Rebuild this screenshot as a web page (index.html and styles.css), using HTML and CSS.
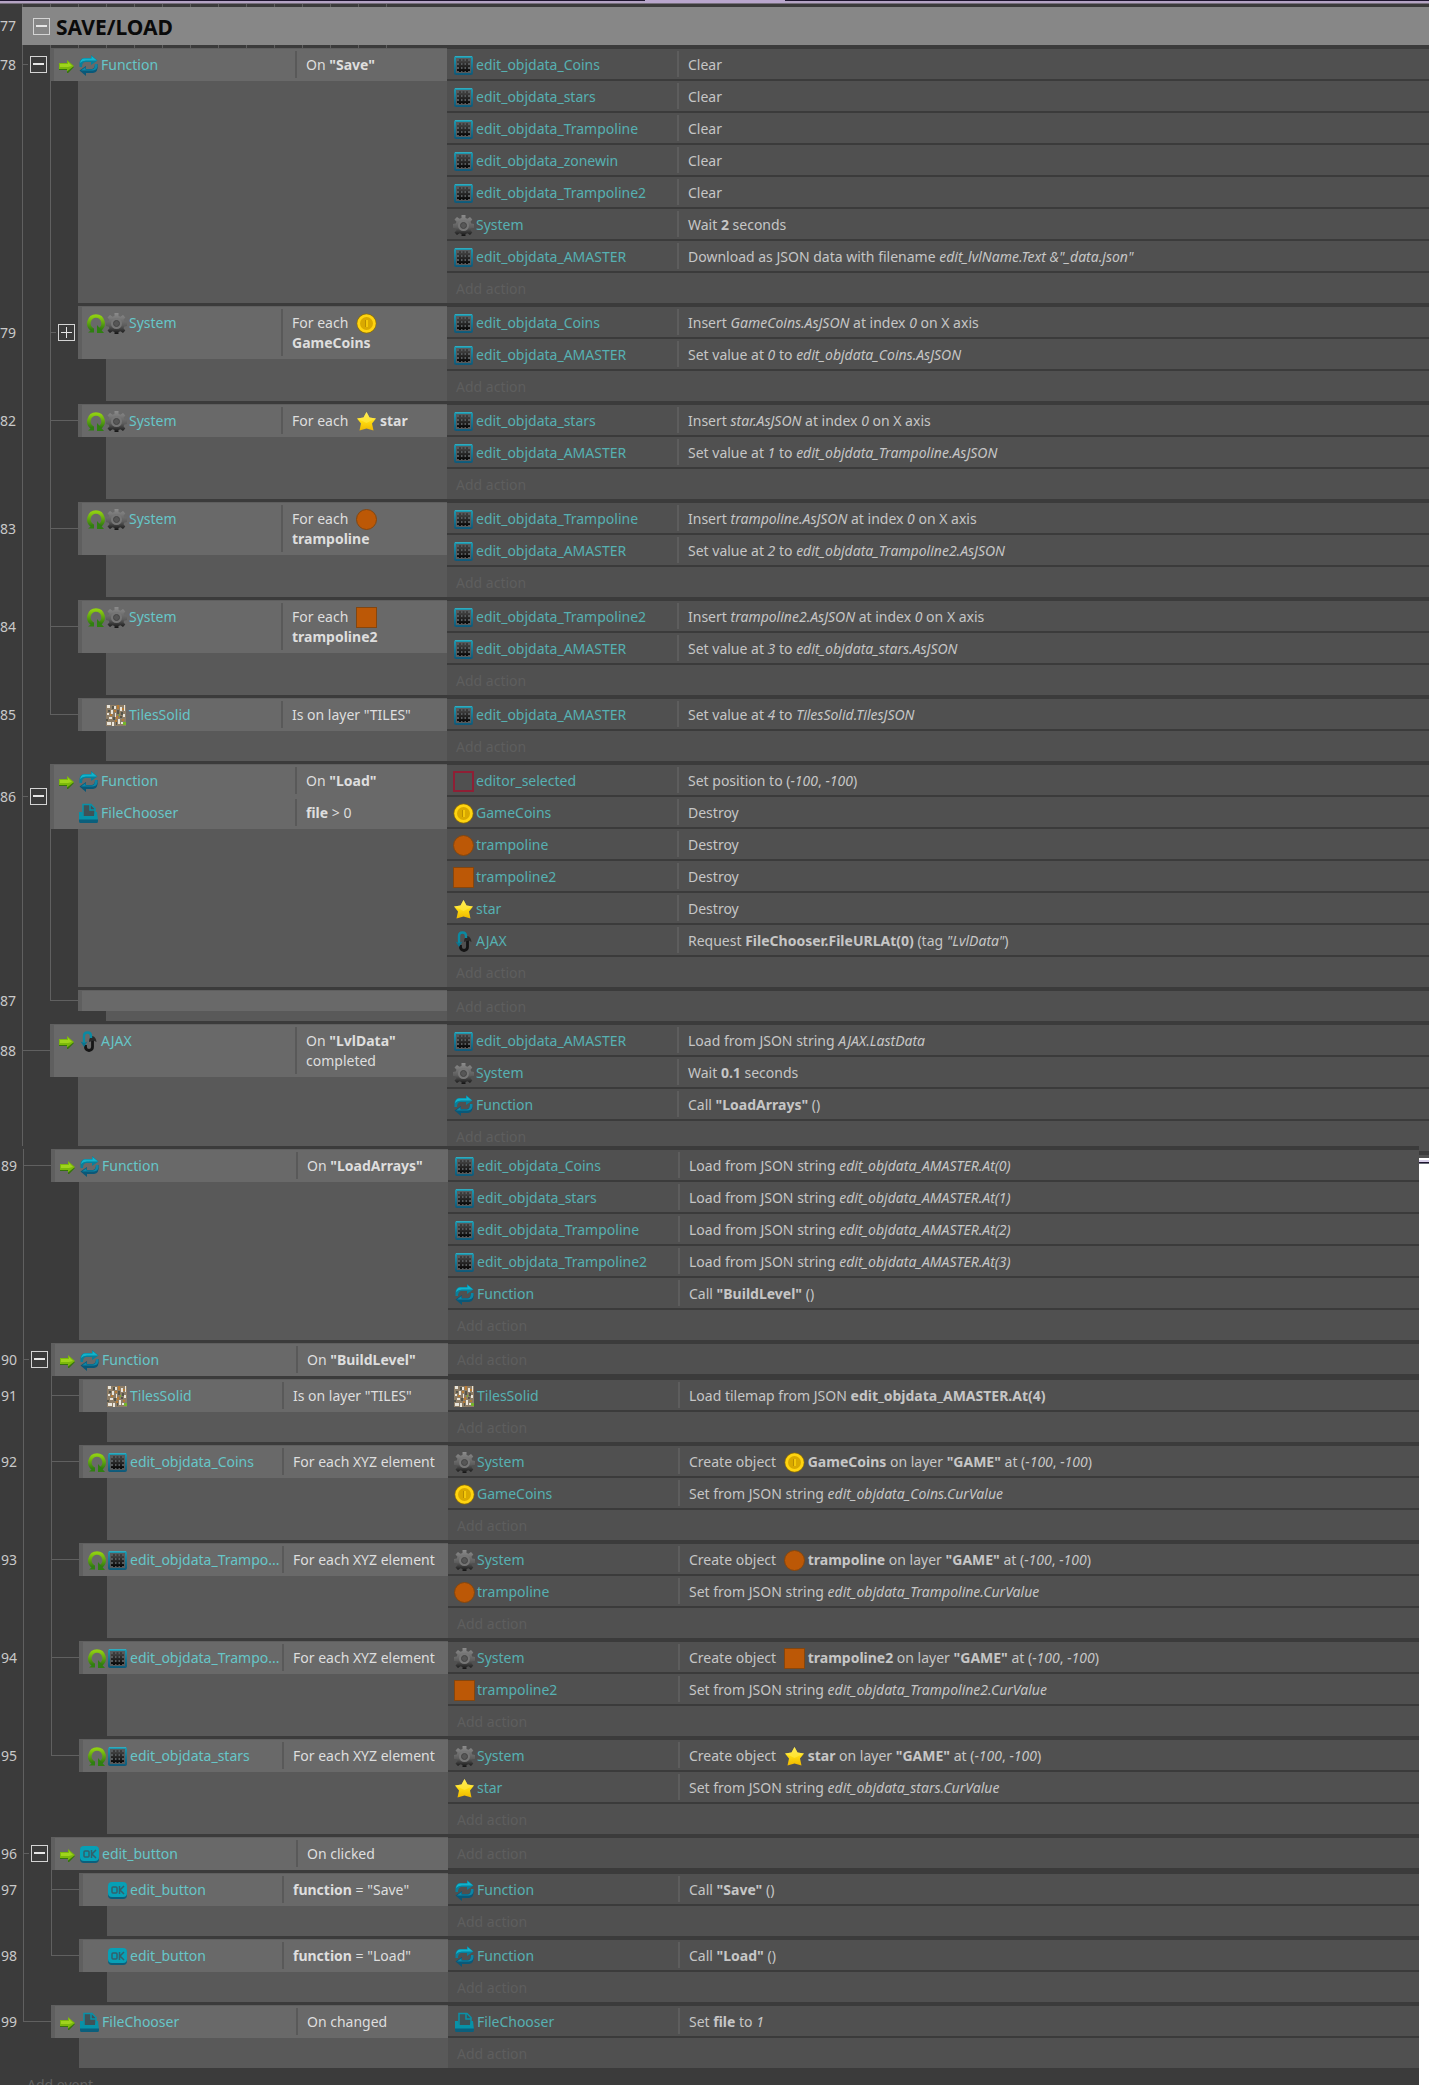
FILE: index.html
```
<!DOCTYPE html>
<html lang="en">
<head>
    <meta charset="utf-8">
    <title>Event sheet - SAVE/LOAD</title>
    <link rel="stylesheet" href="styles.css">
</head>
<body>
<svg class="defs" width="0" height="0" aria-hidden="true">
    <defs>
        <linearGradient id="gTeal" x1="0" y1="0" x2="0" y2="1"><stop offset="0" stop-color="#1f9ab0"/><stop offset="1" stop-color="#0f5878"/></linearGradient>
        <linearGradient id="gDark" x1="0" y1="0" x2="0" y2="1"><stop offset="0" stop-color="#404040"/><stop offset="1" stop-color="#0a0a0a"/></linearGradient>
        <linearGradient id="gGear" x1="0" y1="0" x2="0" y2="1"><stop offset="0" stop-color="#8c8c8c"/><stop offset=".6" stop-color="#5c5c5c"/><stop offset="1" stop-color="#141414"/></linearGradient>
        <linearGradient id="gLoop" x1="0" y1="0" x2="0" y2="1"><stop offset="0" stop-color="#8fd010"/><stop offset="1" stop-color="#2f7a10"/></linearGradient>
        <linearGradient id="gStar" x1="0" y1="0" x2="0" y2="1"><stop offset="0" stop-color="#fff06a"/><stop offset="0.5" stop-color="#ffdc10"/><stop offset="1" stop-color="#efb800"/></linearGradient>
    </defs>
    <symbol id="arrow" viewBox="0 0 20 21">
        <path d="M1 9h8V6l7 6-6 6H9v-3H1z" fill="#35740c"/>
        <path d="M1 8h8V5l7 6-7 5.500V14H1z" fill="#7cb80c"/>
        <path d="M2 9h8V7l4 4-4 1H2z" fill="#9fd41c"/>
    </symbol>
    <symbol id="func" viewBox="0 0 21 21">
        <path d="M1.500 12Q.5 3.500 6 3H13V0l6.500 5.500L13 10V7H7Q4 7.500 4 12z" fill="#0a7f9a"/>
        <path d="M2 8Q3 3.500 6 3.500H13.500V1L19 5.500H8Q4 5.500 2 8z" fill="#10b4cc"/>
        <path d="M19.500 9q1 8.500-4.500 9H8v3l-6.500-5.500L8 11v3h6q3-.5 3-5z" fill="#0a5878"/>
        <path d="M19.500 9q.5 6-4.500 6.500H3L7.500 12v2.500H14q3-.5 3-5.500z" fill="#0c86a6"/>
    </symbol>
    <symbol id="arr" viewBox="0 0 21 21">
        <rect x="1" y="1" width="19" height="19" rx="2" fill="url(#gTeal)"/>
        <rect x="3" y="3" width="15" height="15" fill="#565a5c"/>
        <path d="M6 4h2v13H6zM9.500 4h2v13h-2zM13 4h2v13h-2z" fill="url(#gDark)"/>
        <path d="M4 6h13v2H4zM4 10h13v2H4zM4 14h13v2H4z" fill="url(#gDark)"/>
        <path d="M2 1.500h17" stroke="#30aabd"/>
    </symbol>
    <symbol id="gear" viewBox="0 0 21 21">
        <path d="M8.500 0h4v3l2 .8L17 2l2.300 2.500-1.800 2.300.7 1.700 2.800.5v4l-2.800.5-.7 1.700 1.800 2.300L17 20l-2.500-1.800-2 .8v2h-4v-2l-2-.8L4 20l-2.500-2.500 2-2.300-.8-1.700L0 13V9l2.700-.5.8-1.700-2-2.300L4 2l2.500 1.800 2-.8z" fill="url(#gGear)"/>
        <circle cx="10.500" cy="10.500" r="5.500" fill="#767676"/>
        <circle cx="10.500" cy="10.500" r="3" fill="#565656" stroke="#454545"/>
    </symbol>
    <symbol id="loop" viewBox="0 0 20 21">
        <path d="M6.500 17Q2 14 3 9q1.500-6 7-6t7 6q1 5-4 8" fill="none" stroke="url(#gLoop)" stroke-width="3.600"/>
        <path d="M11 12v8h7z" fill="#2f8010"/>
        <path d="M2 19.500h6V15z" fill="#2f8010"/>
    </symbol>
    <symbol id="file" viewBox="0 0 21 21">
        <path d="M5 14V1.500h8l4 4V14" fill="#3f5257" stroke="#0891a8" stroke-width="1.500"/>
        <path d="M12 2v5h5" fill="none" stroke="#0891a8" stroke-width="1.500"/>
        <path d="M1 9h3l1 4h11l1-4h2l1 9q0 1-1 1H2q-1 0-1-1z" fill="#0792a8"/>
        <path d="M1 16.500h19V18q0 2-1 2H2q-1 0-1-2z" fill="#0b5f7c"/>
    </symbol>
    <symbol id="ajax" viewBox="0 0 21 21">
        <path d="M14.500 9v7q0 3-3.500 3.500-3.500-.5-3.500-3.500v-2" fill="none" stroke="#151515" stroke-width="2.800"/>
        <path d="M11 11q0-5 3.500-6Q18 6 18.500 11l-3-1.500z" fill="#2a2a2a"/>
        <path d="M6 13V5q0-3.500 3.500-3.500T13 5v2" fill="none" stroke="#0b8aa2" stroke-width="2.400"/>
        <path d="M2.500 10.500L6 12l3.500-1.500L6 16z" fill="#0b7590"/>
    </symbol>
    <symbol id="coin" viewBox="0 0 21 21">
        <circle cx="10.500" cy="10.500" r="10" fill="#8d6f08"/>
        <circle cx="10.500" cy="10.500" r="9.300" fill="#ffd410"/>
        <circle cx="10.500" cy="10.500" r="6.500" fill="#d9a900"/>
        <path d="M9 7h3v7H9z" fill="#f4c808"/><path d="M9 7h1v7H9z" fill="#b98d00"/>
    </symbol>
    <symbol id="circle" viewBox="0 0 21 21"><circle cx="10.500" cy="10.500" r="10" fill="#bc5806" stroke="#84460f"/></symbol>
    <symbol id="square" viewBox="0 0 21 21"><rect x=".5" y=".5" width="20" height="20" fill="#bc5806" stroke="#84460f"/></symbol>
    <symbol id="box" viewBox="0 0 21 21"><rect x="1" y="1" width="19" height="19" fill="none" stroke="#8f1f35" stroke-width="2"/></symbol>
    <symbol id="star" viewBox="0 0 21 21">
        <path d="M10.500 1l3 5.500 6.500 1-4 5 1.500 7-7-2-7 2 1.500-7-4-5 6.500-1z" fill="url(#gStar)"/>
        <path d="M10.500 1l3 5.500 6.500 1-9.500 4.500-9.500-4.500 6.500-1z" fill="#ffe94a" opacity=".6"/>
    </symbol>
    <symbol id="tiles" viewBox="0 0 21 21">
        <rect width="20" height="21" fill="#8c7c66"/>
        <path d="M1 0h3v3H1zM5 5h2v4H5zM1 8h2v2H1zM3 12h3v2H3zM1 17h4v3H1zM8 1h2v3H8zM14 2h2v4h-2zM18 0h1v6h-1zM17 9h2v3h-2zM12 14h2v5h-2zM6 17h2v4H6zM15 17h2v2h-2zM9 8h1v4H9z" fill="#e8e4da"/>
        <path d="M6 1h2v3H6zM2 5h2v2H2zM11 5h2v4h-2zM15 7h2v3h-2zM7 12h2v3H7zM14 11h2v2h-2zM10 17h1v3h-1zM0 14h2v2H0z" fill="#55554c"/>
        <path d="M11 0h2v4h-2zM8 5h2v2H8zM10 11h2v3h-2zM16 3h2v2h-2zM4 9h2v2H4zM9 15h2v2H9zM16 14h2v2h-2z" fill="#b57a34"/>
        <path d="M17 17h3v3h-3zM13 9h1v2h-1z" fill="#74b52a"/>
    </symbol>
    <symbol id="ok" viewBox="0 0 21 21">
        <rect x="1" y="3" width="19" height="16" rx="4" fill="#0c5f7c"/>
        <rect x="1" y="2" width="19" height="15" rx="4" fill="#07a0b6"/>
        <rect x="5" y="7" width="5" height="6" rx="1" fill="none" stroke="#33606c" stroke-width="1.500"/>
        <path d="M12.500 6v8M17 6l-4 4 4 4" fill="none" stroke="#33606c" stroke-width="1.500"/>
    </symbol>
</svg>

<div class="titlebar"><span class="tab"></span></div>

<main>
<section class="sheet sheet-top">
    <div class="group-row">
        <span class="num">77</span>
        <div class="group"><button class="toggle" aria-label="Collapse group"></button><h1>SAVE/LOAD</h1></div>
    </div>

    <!-- 78 -->
    <div class="event">
        <div class="left">
            <div class="head"><span class="num">78</span><span class="rail fold"><button class="toggle" aria-label="Collapse"></button></span>
                <div class="block">
                    <div class="cond"><span class="obj"><svg class="flag"><use href="#arrow"/></svg><svg class="ico"><use href="#func"/></svg>Function</span><span class="txt">On <b>"Save"</b></span></div>
                </div>
            </div>
            <div class="rest"><span class="num"></span><span class="rail"></span><span class="rail"></span><span class="fill"></span></div>
        </div>
        <div class="actions">
            <div class="act"><span class="obj"><svg class="ico"><use href="#arr"/></svg>edit_objdata_Coins</span><span class="txt">Clear</span></div>
            <div class="act"><span class="obj"><svg class="ico"><use href="#arr"/></svg>edit_objdata_stars</span><span class="txt">Clear</span></div>
            <div class="act"><span class="obj"><svg class="ico"><use href="#arr"/></svg>edit_objdata_Trampoline</span><span class="txt">Clear</span></div>
            <div class="act"><span class="obj"><svg class="ico"><use href="#arr"/></svg>edit_objdata_zonewin</span><span class="txt">Clear</span></div>
            <div class="act"><span class="obj"><svg class="ico"><use href="#arr"/></svg>edit_objdata_Trampoline2</span><span class="txt">Clear</span></div>
            <div class="act"><span class="obj"><svg class="ico"><use href="#gear"/></svg>System</span><span class="txt">Wait <b>2</b> seconds</span></div>
            <div class="act"><span class="obj"><svg class="ico"><use href="#arr"/></svg>edit_objdata_AMASTER</span><span class="txt">Download as JSON data with filename <i>edit_lvlName.Text &amp;"_data.json"</i></span></div>
            <button class="add">Add action</button>
        </div>
    </div>

    <!-- 79 -->
    <div class="event sub">
        <div class="left">
            <div class="head"><span class="num">79</span><span class="rail"></span><span class="rail fold"><button class="toggle closed" aria-label="Expand"></button></span>
                <div class="block">
                    <div class="cond"><span class="obj"><svg class="flag"><use href="#loop"/></svg><svg class="ico"><use href="#gear"/></svg>System</span><span class="txt">For each <svg class="pic"><use href="#coin"/></svg> <b>GameCoins</b></span></div>
                </div>
            </div>
            <div class="rest"><span class="num"></span><span class="rail"></span><span class="rail"></span><span class="rail none"></span><span class="fill"></span></div>
        </div>
        <div class="actions">
            <div class="act"><span class="obj"><svg class="ico"><use href="#arr"/></svg>edit_objdata_Coins</span><span class="txt">Insert <i>GameCoins.AsJSON</i> at index <i>0</i> on X axis</span></div>
            <div class="act"><span class="obj"><svg class="ico"><use href="#arr"/></svg>edit_objdata_AMASTER</span><span class="txt">Set value at <i>0</i> to <i>edit_objdata_Coins.AsJSON</i></span></div>
            <button class="add">Add action</button>
        </div>
    </div>

    <!-- 82 -->
    <div class="event sub">
        <div class="left">
            <div class="head"><span class="num">82</span><span class="rail"></span><span class="rail dash"></span>
                <div class="block">
                    <div class="cond"><span class="obj"><svg class="flag"><use href="#loop"/></svg><svg class="ico"><use href="#gear"/></svg>System</span><span class="txt">For each <svg class="pic"><use href="#star"/></svg><b>star</b></span></div>
                </div>
            </div>
            <div class="rest"><span class="num"></span><span class="rail"></span><span class="rail"></span><span class="rail none"></span><span class="fill"></span></div>
        </div>
        <div class="actions">
            <div class="act"><span class="obj"><svg class="ico"><use href="#arr"/></svg>edit_objdata_stars</span><span class="txt">Insert <i>star.AsJSON</i> at index <i>0</i> on X axis</span></div>
            <div class="act"><span class="obj"><svg class="ico"><use href="#arr"/></svg>edit_objdata_AMASTER</span><span class="txt">Set value at <i>1</i> to <i>edit_objdata_Trampoline.AsJSON</i></span></div>
            <button class="add">Add action</button>
        </div>
    </div>

    <!-- 83 -->
    <div class="event sub">
        <div class="left">
            <div class="head"><span class="num">83</span><span class="rail"></span><span class="rail dash"></span>
                <div class="block">
                    <div class="cond"><span class="obj"><svg class="flag"><use href="#loop"/></svg><svg class="ico"><use href="#gear"/></svg>System</span><span class="txt">For each <svg class="pic"><use href="#circle"/></svg> <b>trampoline</b></span></div>
                </div>
            </div>
            <div class="rest"><span class="num"></span><span class="rail"></span><span class="rail"></span><span class="rail none"></span><span class="fill"></span></div>
        </div>
        <div class="actions">
            <div class="act"><span class="obj"><svg class="ico"><use href="#arr"/></svg>edit_objdata_Trampoline</span><span class="txt">Insert <i>trampoline.AsJSON</i> at index <i>0</i> on X axis</span></div>
            <div class="act"><span class="obj"><svg class="ico"><use href="#arr"/></svg>edit_objdata_AMASTER</span><span class="txt">Set value at <i>2</i> to <i>edit_objdata_Trampoline2.AsJSON</i></span></div>
            <button class="add">Add action</button>
        </div>
    </div>

    <!-- 84 -->
    <div class="event sub">
        <div class="left">
            <div class="head"><span class="num">84</span><span class="rail"></span><span class="rail dash"></span>
                <div class="block">
                    <div class="cond"><span class="obj"><svg class="flag"><use href="#loop"/></svg><svg class="ico"><use href="#gear"/></svg>System</span><span class="txt">For each <svg class="pic"><use href="#square"/></svg> <b>trampoline2</b></span></div>
                </div>
            </div>
            <div class="rest"><span class="num"></span><span class="rail"></span><span class="rail"></span><span class="rail none"></span><span class="fill"></span></div>
        </div>
        <div class="actions">
            <div class="act"><span class="obj"><svg class="ico"><use href="#arr"/></svg>edit_objdata_Trampoline2</span><span class="txt">Insert <i>trampoline2.AsJSON</i> at index <i>0</i> on X axis</span></div>
            <div class="act"><span class="obj"><svg class="ico"><use href="#arr"/></svg>edit_objdata_AMASTER</span><span class="txt">Set value at <i>3</i> to <i>edit_objdata_stars.AsJSON</i></span></div>
            <button class="add">Add action</button>
        </div>
    </div>

    <!-- 85 -->
    <div class="event sub">
        <div class="left">
            <div class="head"><span class="num">85</span><span class="rail"></span><span class="rail dash last"></span>
                <div class="block">
                    <div class="cond"><span class="obj"><span class="flag"></span><svg class="ico"><use href="#tiles"/></svg>TilesSolid</span><span class="txt">Is on layer "TILES"</span></div>
                </div>
            </div>
            <div class="rest"><span class="num"></span><span class="rail"></span><span class="rail none"></span><span class="rail none"></span><span class="fill"></span></div>
        </div>
        <div class="actions">
            <div class="act"><span class="obj"><svg class="ico"><use href="#arr"/></svg>edit_objdata_AMASTER</span><span class="txt">Set value at <i>4</i> to <i>TilesSolid.TilesJSON</i></span></div>
            <button class="add">Add action</button>
        </div>
    </div>

    <!-- 86 -->
    <div class="event">
        <div class="left">
            <div class="head"><span class="num">86</span><span class="rail fold"><button class="toggle" aria-label="Collapse"></button></span>
                <div class="block">
                    <div class="cond"><span class="obj"><svg class="flag"><use href="#arrow"/></svg><svg class="ico"><use href="#func"/></svg>Function</span><span class="txt">On <b>"Load"</b></span></div>
                    <div class="cond"><span class="obj"><span class="flag"></span><svg class="ico"><use href="#file"/></svg>FileChooser</span><span class="txt"><b>file</b> &gt; 0</span></div>
                </div>
            </div>
            <div class="rest"><span class="num"></span><span class="rail"></span><span class="rail"></span><span class="fill"></span></div>
        </div>
        <div class="actions">
            <div class="act"><span class="obj"><svg class="ico"><use href="#box"/></svg>editor_selected</span><span class="txt">Set position to (<i>-100</i>, <i>-100</i>)</span></div>
            <div class="act"><span class="obj"><svg class="ico"><use href="#coin"/></svg>GameCoins</span><span class="txt">Destroy</span></div>
            <div class="act"><span class="obj"><svg class="ico"><use href="#circle"/></svg>trampoline</span><span class="txt">Destroy</span></div>
            <div class="act"><span class="obj"><svg class="ico"><use href="#square"/></svg>trampoline2</span><span class="txt">Destroy</span></div>
            <div class="act"><span class="obj"><svg class="ico"><use href="#star"/></svg>star</span><span class="txt">Destroy</span></div>
            <div class="act"><span class="obj"><svg class="ico"><use href="#ajax"/></svg>AJAX</span><span class="txt">Request <b>FileChooser.FileURLAt(0)</b> (tag <i>"LvlData"</i>)</span></div>
            <button class="add">Add action</button>
        </div>
    </div>

    <!-- 87 -->
    <div class="event sub">
        <div class="left">
            <div class="head"><span class="num">87</span><span class="rail"></span><span class="rail dash last"></span>
                <div class="block empty"></div>
            </div>
            <div class="rest"><span class="num"></span><span class="rail"></span><span class="rail none"></span><span class="rail none"></span><span class="fill"></span></div>
        </div>
        <div class="actions">
            <button class="add">Add action</button>
        </div>
    </div>

    <!-- 88 -->
    <div class="event cut">
        <div class="left">
            <div class="head"><span class="num">88</span><span class="rail dash"></span>
                <div class="block">
                    <div class="cond"><span class="obj"><svg class="flag"><use href="#arrow"/></svg><svg class="ico"><use href="#ajax"/></svg>AJAX</span><span class="txt">On <b>"LvlData"</b> completed</span></div>
                </div>
            </div>
            <div class="rest"><span class="num"></span><span class="rail"></span><span class="rail none"></span><span class="fill"></span></div>
        </div>
        <div class="actions">
            <div class="act"><span class="obj"><svg class="ico"><use href="#arr"/></svg>edit_objdata_AMASTER</span><span class="txt">Load from JSON string <i>AJAX.LastData</i></span></div>
            <div class="act"><span class="obj"><svg class="ico"><use href="#gear"/></svg>System</span><span class="txt">Wait <b>0.1</b> seconds</span></div>
            <div class="act"><span class="obj"><svg class="ico"><use href="#func"/></svg>Function</span><span class="txt">Call <b>"LoadArrays"</b> ()</span></div>
            <button class="add">Add action</button>
        </div>
    </div>
</section>

<section class="sheet sheet-bottom">
    <div class="corner"></div>
    <!-- 89 -->
    <div class="event">
        <div class="left">
            <div class="head"><span class="num">89</span><span class="rail dash"></span>
                <div class="block">
                    <div class="cond"><span class="obj"><svg class="flag"><use href="#arrow"/></svg><svg class="ico"><use href="#func"/></svg>Function</span><span class="txt">On <b>"LoadArrays"</b></span></div>
                </div>
            </div>
            <div class="rest"><span class="num"></span><span class="rail"></span><span class="rail none"></span><span class="fill"></span></div>
        </div>
        <div class="actions">
            <div class="act"><span class="obj"><svg class="ico"><use href="#arr"/></svg>edit_objdata_Coins</span><span class="txt">Load from JSON string <i>edit_objdata_AMASTER.At(0)</i></span></div>
            <div class="act"><span class="obj"><svg class="ico"><use href="#arr"/></svg>edit_objdata_stars</span><span class="txt">Load from JSON string <i>edit_objdata_AMASTER.At(1)</i></span></div>
            <div class="act"><span class="obj"><svg class="ico"><use href="#arr"/></svg>edit_objdata_Trampoline</span><span class="txt">Load from JSON string <i>edit_objdata_AMASTER.At(2)</i></span></div>
            <div class="act"><span class="obj"><svg class="ico"><use href="#arr"/></svg>edit_objdata_Trampoline2</span><span class="txt">Load from JSON string <i>edit_objdata_AMASTER.At(3)</i></span></div>
            <div class="act"><span class="obj"><svg class="ico"><use href="#func"/></svg>Function</span><span class="txt">Call <b>"BuildLevel"</b> ()</span></div>
            <button class="add">Add action</button>
        </div>
    </div>

    <!-- 90 -->
    <div class="event">
        <div class="left">
            <div class="head"><span class="num">90</span><span class="rail fold"><button class="toggle" aria-label="Collapse"></button></span>
                <div class="block">
                    <div class="cond"><span class="obj"><svg class="flag"><use href="#arrow"/></svg><svg class="ico"><use href="#func"/></svg>Function</span><span class="txt">On <b>"BuildLevel"</b></span></div>
                </div>
            </div>
            <div class="rest"><span class="num"></span><span class="rail"></span><span class="rail"></span><span class="fill"></span></div>
        </div>
        <div class="actions">
            <button class="add">Add action</button>
        </div>
    </div>

    <!-- 91 -->
    <div class="event sub">
        <div class="left">
            <div class="head"><span class="num">91</span><span class="rail"></span><span class="rail dash"></span>
                <div class="block">
                    <div class="cond"><span class="obj"><span class="flag"></span><svg class="ico"><use href="#tiles"/></svg>TilesSolid</span><span class="txt">Is on layer "TILES"</span></div>
                </div>
            </div>
            <div class="rest"><span class="num"></span><span class="rail"></span><span class="rail"></span><span class="rail none"></span><span class="fill"></span></div>
        </div>
        <div class="actions">
            <div class="act"><span class="obj"><svg class="ico"><use href="#tiles"/></svg>TilesSolid</span><span class="txt">Load tilemap from JSON <b>edit_objdata_AMASTER.At(4)</b></span></div>
            <button class="add">Add action</button>
        </div>
    </div>

    <!-- 92 -->
    <div class="event sub">
        <div class="left">
            <div class="head"><span class="num">92</span><span class="rail"></span><span class="rail dash"></span>
                <div class="block">
                    <div class="cond"><span class="obj"><svg class="flag"><use href="#loop"/></svg><svg class="ico"><use href="#arr"/></svg>edit_objdata_Coins</span><span class="txt">For each XYZ element</span></div>
                </div>
            </div>
            <div class="rest"><span class="num"></span><span class="rail"></span><span class="rail"></span><span class="rail none"></span><span class="fill"></span></div>
        </div>
        <div class="actions">
            <div class="act"><span class="obj"><svg class="ico"><use href="#gear"/></svg>System</span><span class="txt">Create object <svg class="pic"><use href="#coin"/></svg><b>GameCoins</b> on layer <b>"GAME"</b> at (<i>-100</i>, <i>-100</i>)</span></div>
            <div class="act"><span class="obj"><svg class="ico"><use href="#coin"/></svg>GameCoins</span><span class="txt">Set from JSON string <i>edit_objdata_Coins.CurValue</i></span></div>
            <button class="add">Add action</button>
        </div>
    </div>

    <!-- 93 -->
    <div class="event sub">
        <div class="left">
            <div class="head"><span class="num">93</span><span class="rail"></span><span class="rail dash"></span>
                <div class="block">
                    <div class="cond"><span class="obj"><svg class="flag"><use href="#loop"/></svg><svg class="ico"><use href="#arr"/></svg>edit_objdata_Trampo...</span><span class="txt">For each XYZ element</span></div>
                </div>
            </div>
            <div class="rest"><span class="num"></span><span class="rail"></span><span class="rail"></span><span class="rail none"></span><span class="fill"></span></div>
        </div>
        <div class="actions">
            <div class="act"><span class="obj"><svg class="ico"><use href="#gear"/></svg>System</span><span class="txt">Create object <svg class="pic"><use href="#circle"/></svg><b>trampoline</b> on layer <b>"GAME"</b> at (<i>-100</i>, <i>-100</i>)</span></div>
            <div class="act"><span class="obj"><svg class="ico"><use href="#circle"/></svg>trampoline</span><span class="txt">Set from JSON string <i>edit_objdata_Trampoline.CurValue</i></span></div>
            <button class="add">Add action</button>
        </div>
    </div>

    <!-- 94 -->
    <div class="event sub">
        <div class="left">
            <div class="head"><span class="num">94</span><span class="rail"></span><span class="rail dash"></span>
                <div class="block">
                    <div class="cond"><span class="obj"><svg class="flag"><use href="#loop"/></svg><svg class="ico"><use href="#arr"/></svg>edit_objdata_Trampo...</span><span class="txt">For each XYZ element</span></div>
                </div>
            </div>
            <div class="rest"><span class="num"></span><span class="rail"></span><span class="rail"></span><span class="rail none"></span><span class="fill"></span></div>
        </div>
        <div class="actions">
            <div class="act"><span class="obj"><svg class="ico"><use href="#gear"/></svg>System</span><span class="txt">Create object <svg class="pic"><use href="#square"/></svg><b>trampoline2</b> on layer <b>"GAME"</b> at (<i>-100</i>, <i>-100</i>)</span></div>
            <div class="act"><span class="obj"><svg class="ico"><use href="#square"/></svg>trampoline2</span><span class="txt">Set from JSON string <i>edit_objdata_Trampoline2.CurValue</i></span></div>
            <button class="add">Add action</button>
        </div>
    </div>

    <!-- 95 -->
    <div class="event sub">
        <div class="left">
            <div class="head"><span class="num">95</span><span class="rail"></span><span class="rail dash last"></span>
                <div class="block">
                    <div class="cond"><span class="obj"><svg class="flag"><use href="#loop"/></svg><svg class="ico"><use href="#arr"/></svg>edit_objdata_stars</span><span class="txt">For each XYZ element</span></div>
                </div>
            </div>
            <div class="rest"><span class="num"></span><span class="rail"></span><span class="rail none"></span><span class="rail none"></span><span class="fill"></span></div>
        </div>
        <div class="actions">
            <div class="act"><span class="obj"><svg class="ico"><use href="#gear"/></svg>System</span><span class="txt">Create object <svg class="pic"><use href="#star"/></svg><b>star</b> on layer <b>"GAME"</b> at (<i>-100</i>, <i>-100</i>)</span></div>
            <div class="act"><span class="obj"><svg class="ico"><use href="#star"/></svg>star</span><span class="txt">Set from JSON string <i>edit_objdata_stars.CurValue</i></span></div>
            <button class="add">Add action</button>
        </div>
    </div>

    <!-- 96 -->
    <div class="event">
        <div class="left">
            <div class="head"><span class="num">96</span><span class="rail fold"><button class="toggle" aria-label="Collapse"></button></span>
                <div class="block">
                    <div class="cond"><span class="obj"><svg class="flag"><use href="#arrow"/></svg><svg class="ico"><use href="#ok"/></svg>edit_button</span><span class="txt">On clicked</span></div>
                </div>
            </div>
            <div class="rest"><span class="num"></span><span class="rail"></span><span class="rail"></span><span class="fill"></span></div>
        </div>
        <div class="actions">
            <button class="add">Add action</button>
        </div>
    </div>

    <!-- 97 -->
    <div class="event sub">
        <div class="left">
            <div class="head"><span class="num">97</span><span class="rail"></span><span class="rail dash"></span>
                <div class="block">
                    <div class="cond"><span class="obj"><span class="flag"></span><svg class="ico"><use href="#ok"/></svg>edit_button</span><span class="txt"><b>function</b> = "Save"</span></div>
                </div>
            </div>
            <div class="rest"><span class="num"></span><span class="rail"></span><span class="rail"></span><span class="rail none"></span><span class="fill"></span></div>
        </div>
        <div class="actions">
            <div class="act"><span class="obj"><svg class="ico"><use href="#func"/></svg>Function</span><span class="txt">Call <b>"Save"</b> ()</span></div>
            <button class="add">Add action</button>
        </div>
    </div>

    <!-- 98 -->
    <div class="event sub">
        <div class="left">
            <div class="head"><span class="num">98</span><span class="rail"></span><span class="rail dash last"></span>
                <div class="block">
                    <div class="cond"><span class="obj"><span class="flag"></span><svg class="ico"><use href="#ok"/></svg>edit_button</span><span class="txt"><b>function</b> = "Load"</span></div>
                </div>
            </div>
            <div class="rest"><span class="num"></span><span class="rail"></span><span class="rail none"></span><span class="rail none"></span><span class="fill"></span></div>
        </div>
        <div class="actions">
            <div class="act"><span class="obj"><svg class="ico"><use href="#func"/></svg>Function</span><span class="txt">Call <b>"Load"</b> ()</span></div>
            <button class="add">Add action</button>
        </div>
    </div>

    <!-- 99 -->
    <div class="event">
        <div class="left">
            <div class="head"><span class="num">99</span><span class="rail dash last"></span>
                <div class="block">
                    <div class="cond"><span class="obj"><svg class="flag"><use href="#arrow"/></svg><svg class="ico"><use href="#file"/></svg>FileChooser</span><span class="txt">On changed</span></div>
                </div>
            </div>
            <div class="rest"><span class="num"></span><span class="rail none"></span><span class="rail none"></span><span class="fill"></span></div>
        </div>
        <div class="actions">
            <div class="act"><span class="obj"><svg class="ico"><use href="#file"/></svg>FileChooser</span><span class="txt">Set <b>file</b> to <i>1</i></span></div>
            <button class="add">Add action</button>
        </div>
    </div>
    <div class="footer"><button class="add-event">Add event</button></div>
</section>
</main>
</body>
</html>
```
FILE: styles.css
```
* {
    box-sizing: border-box;
}
body {
    margin: 0;
    background: #fff;
    font-family: "Noto Sans", "Open Sans", sans-serif;
    font-size: 14px;
    line-height: 20px;
    color: #c6c6c6;
}
button {
    font: inherit;
    border: 0;
    background: none;
    padding: 0;
    text-align: left;
    cursor: pointer;
}
.defs {
    position: absolute;
}

/* strip of the window above the sheet */
.titlebar {
    display: flex;
    justify-content: center;
    height: 4px;
    margin-right: 11px;
    background: linear-gradient(#1f1530 0 1px, #b5a4c4 1px 3px, #77707c 3px);
}
.tab {
    width: 140px;
    height: 3px;
    background: #b9a6cc;
}

.sheet {
    background: #3b3b3b;
}
.sheet-top {
    margin-right: 11px;
    padding-top: 3px;
    background: repeating-linear-gradient(90deg, #606060 0 1px, transparent 1px 28px) 22px 0 / 366px 47px no-repeat #3b3b3b;
}
.sheet-bottom {
    position: relative;
    margin-right: 21px;
    padding: 3px 0 0 1px;
}
.corner {
    position: absolute;
    left: 100%;
    top: 0;
    width: 10px;
    height: 18px;
    background: linear-gradient(#505050 0 5px, #3b3b3b 5px 9px, #505050 9px 12px, #fff 12px 14px, #d9d0ea 14px 16px, #1f1530 16px 17px, #6a7078 17px);
}

.num {
    flex: none;
    width: 22px;
    align-self: center;
    color: #c9c9c9;
}

/* group title */
.group-row {
    display: flex;
    margin-bottom: 3px;
}
.group-row .num {
    align-self: stretch;
    padding-top: 9px;
    background: #3b3b3b;
}
.group {
    flex: 1;
    display: flex;
    align-items: center;
    gap: 6px;
    height: 38px;
    padding-left: 11px;
    background: #878787;
}
.group h1 {
    margin: 2px 0 0;
    font-size: 21px;
    line-height: 28px;
    color: #0a0a0a;
}

/* event = numbers, tree lines and conditions on the left, actions on the right */
.event {
    display: flex;
    background: #3b3b3b;
}
.left {
    flex: none;
    display: flex;
    flex-direction: column;
    width: 447px;
}
.head,
.rest {
    display: flex;
}
.rest {
    flex: 1;
    min-height: 3px;
}
.rail {
    flex: none;
    width: 28px;
    border-left: 1px solid #606060;
}
.rail.none {
    border-left-color: transparent;
}
.rail.dash {
    background: linear-gradient(#606060, #606060) 0 50% / 27px 1px no-repeat;
}
.rail.fold {
    display: flex;
    align-items: center;
    padding-left: 7px;
    background: linear-gradient(#606060, #606060) 0 50% / 5px 1px no-repeat;
}
.rail.last {
    border-left: 0;
    background: linear-gradient(#606060, #606060) 0 50% / 28px 1px no-repeat, linear-gradient(#606060, #606060) 0 0 / 1px 50% no-repeat;
}
.fill {
    flex: 1;
    margin-bottom: 3px;
    background: #595959;
}

.toggle {
    flex: none;
    width: 17px;
    height: 17px;
    border: 1px solid #d4d4d4;
    background: linear-gradient(#e6e6e6, #e6e6e6) 50% 6px / 11px 2px no-repeat;
}
.toggle.closed {
    background: linear-gradient(#e6e6e6, #e6e6e6) 50% 50% / 11px 1px no-repeat, linear-gradient(#e6e6e6, #e6e6e6) 50% 50% / 1px 11px no-repeat;
}

.block {
    flex: 1;
    border-top: 1px solid #5f5f5f;
    border-left: 4px solid #5f5f5f;
    background: #696969;
    color: #dedede;
}
.block.empty {
    height: 21px;
}
.cond,
.act {
    display: flex;
}
.cond .obj {
    flex: none;
    width: 241px;
    padding: 6px 0 6px 4px;
    color: #66c6c8;
}
.sub .cond .obj {
    width: 199px;
}
.cond .txt {
    flex: 1;
    margin: 2px 0 3px;
    padding: 4px 0 3px 9px;
    border-left: 2px solid #595959;
}
.obj {
    white-space: nowrap;
}
.ico,
.pic,
.flag {
    display: inline-block;
    width: 21px;
    height: 21px;
    margin-bottom: -1px;
    vertical-align: top;
}
.ico {
    margin-right: 2px;
}
.pic {
    margin-left: 4px;
    margin-right: 3px;
}
.flag {
    width: 20px;
}

.actions {
    flex: 1;
    min-width: 0;
    padding: 1px 0 3px;
}
.act {
    height: 32px;
    border-bottom: 2px solid #3b3b3b;
    background: #505050;
}
.act .obj {
    flex: none;
    width: 230px;
    padding: 6px 0 4px 6px;
    color: #56b0b2;
}
.act .txt {
    flex: 1;
    margin: 2px 0;
    padding: 4px 0 2px 9px;
    border-left: 2px solid #5d5d5d;
}
.add {
    display: block;
    width: 100%;
    height: 30px;
    padding: 2px 0 0 9px;
    background: #505050;
    color: #5e5e5e;
}

/* last row of the upper half is cut by the lower half */
.cut .add {
    height: 25px;
    padding-top: 6px;
    overflow: hidden;
}
.cut .actions {
    padding-bottom: 0;
}
.cut .fill {
    margin-bottom: 0;
}

.footer {
    height: 15px;
    padding: 4px 0 0 26px;
    overflow: hidden;
}
.add-event {
    display: block;
    color: #606060;
}
```
